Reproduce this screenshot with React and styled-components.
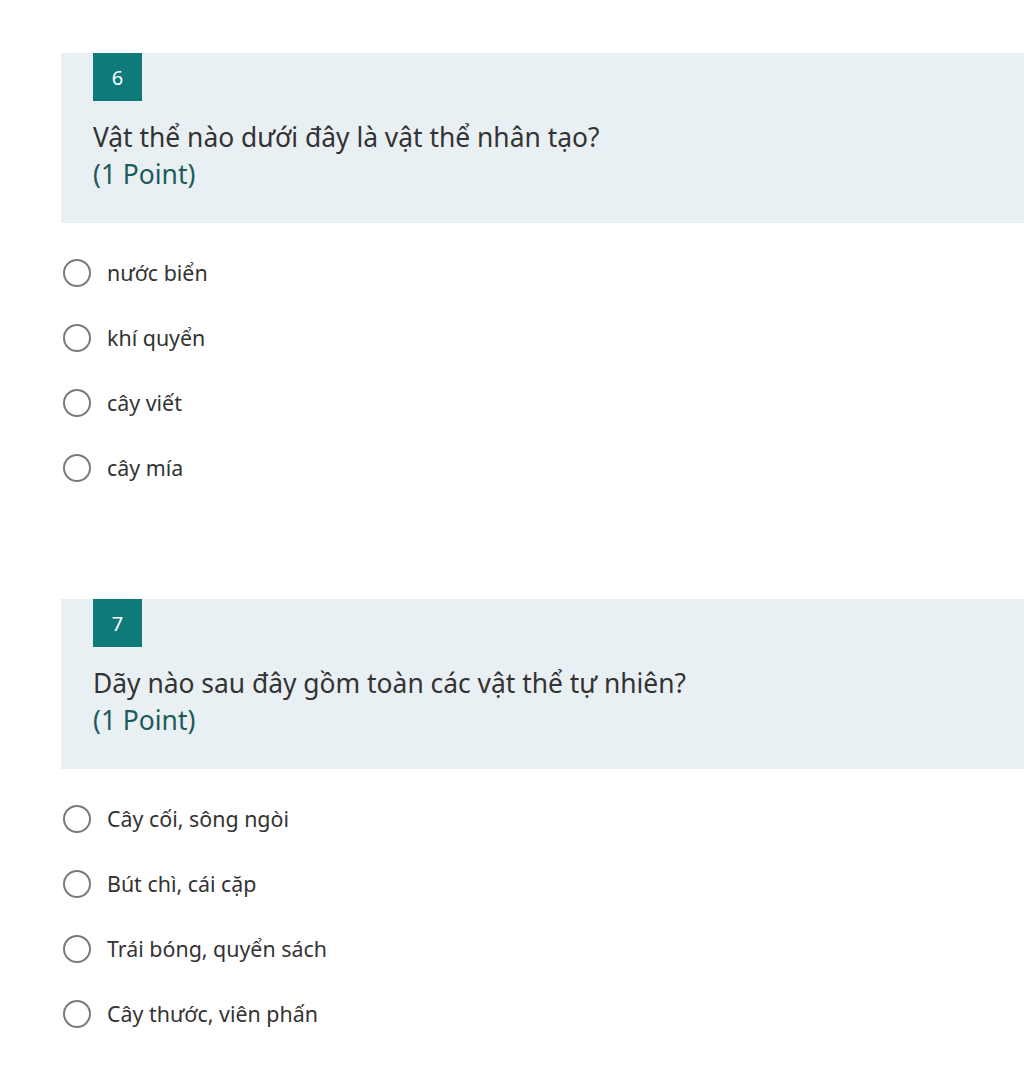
import styled, { createGlobalStyle } from "styled-components";

const GlobalStyle = createGlobalStyle`
  body {
    margin: 0;
    background: #ffffff;
    font-family: "Noto Sans", "Open Sans", sans-serif;
  }
`;

const Page = styled.main`
  display: flex;
  flex-direction: column;
  gap: 99px;
  padding: 53px 0 40px 61px;
`;

const Question = styled.section`
  display: flex;
  flex-direction: column;
`;

const Header = styled.header`
  background: #e9f0f3;
  padding: 0 32px 31px;
  height: 170px;
  box-sizing: border-box;
`;

const Badge = styled.div`
  width: 49px;
  height: 48px;
  background: #0f7a7a;
  color: #ffffff;
  display: flex;
  align-items: center;
  justify-content: center;
  font-size: 20px;
`;

const Title = styled.h2`
  margin: 18px 0 0;
  font-size: 26.4px;
  font-weight: 400;
  line-height: 37px;
  color: #333333;
`;

const Points = styled.span`
  display: block;
  color: #1d5b5b;
`;

const Options = styled.div`
  display: flex;
  flex-direction: column;
  margin-top: 17px;
`;

const Option = styled.label`
  display: flex;
  align-items: center;
  gap: 16px;
  height: 65px;
  padding-left: 2px;
  font-size: 21.4px;
  color: #333333;
`;

const Radio = styled.span`
  width: 28px;
  height: 28px;
  box-sizing: border-box;
  border: 2px solid #7a7a7a;
  border-radius: 50%;
  flex-shrink: 0;
`;

const questions = [
  {
    number: 6,
    title: "Vật thể nào dưới đây là vật thể nhân tạo?",
    options: ["nước biển", "khí quyển", "cây viết", "cây mía"],
  },
  {
    number: 7,
    title: "Dãy nào sau đây gồm toàn các vật thể tự nhiên?",
    options: [
      "Cây cối, sông ngòi",
      "Bút chì, cái cặp",
      "Trái bóng, quyển sách",
      "Cây thước, viên phấn",
    ],
  },
];

const App = () => {
  return (
    <>
      <GlobalStyle />
      <Page>
        {questions.map((q) => (
          <Question key={q.number}>
            <Header>
              <Badge>{q.number}</Badge>
              <Title>
                {q.title}
                <Points>(1 Point)</Points>
              </Title>
            </Header>
            <Options>
              {q.options.map((o) => (
                <Option key={o}>
                  <Radio />
                  {o}
                </Option>
              ))}
            </Options>
          </Question>
        ))}
      </Page>
    </>
  );
};

export default App;
